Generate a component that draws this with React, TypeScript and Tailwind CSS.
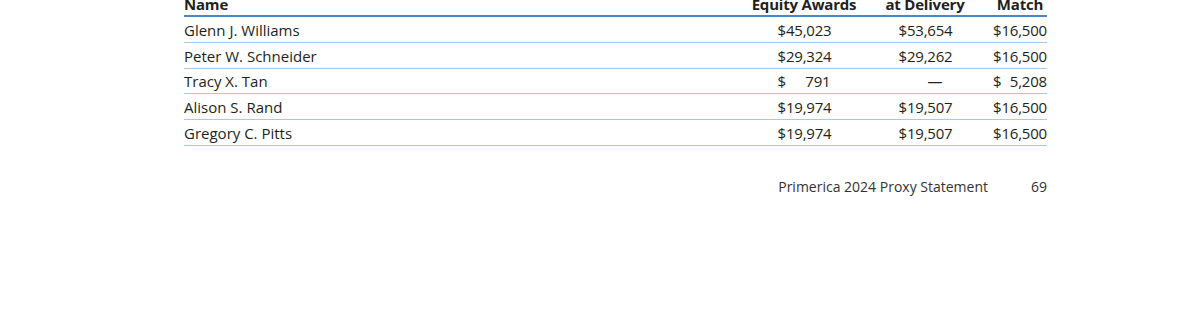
import React from "react";

type Cell = { d: string; n: string } | null;

const rows: { name: string; a: Cell; b: Cell; c: Cell; h: string }[] = [
  { name: "Glenn J. Williams", a: { d: "$", n: "45,023" }, b: { d: "$", n: "53,654" }, c: { d: "$", n: "16,500" }, h: "h-[26px]" },
  { name: "Peter W. Schneider", a: { d: "$", n: "29,324" }, b: { d: "$", n: "29,262" }, c: { d: "$", n: "16,500" }, h: "h-[26px]" },
  { name: "Tracy X. Tan", a: { d: "$", n: "791" }, b: null, c: { d: "$", n: "5,208" }, h: "h-[25px]" },
  { name: "Alison S. Rand", a: { d: "$", n: "19,974" }, b: { d: "$", n: "19,507" }, c: { d: "$", n: "16,500" }, h: "h-[26px]" },
  { name: "Gregory C. Pitts", a: { d: "$", n: "19,974" }, b: { d: "$", n: "19,507" }, c: { d: "$", n: "16,500" }, h: "h-[26px]" },
];

function Money({ v, w }: { v: Cell; w: string }) {
  if (!v) {
    return (
      <div className={`flex justify-end ${w} pr-[9px]`}>
        <span>—</span>
      </div>
    );
  }
  const joined = v.n.length >= 6;
  return (
    <div className={`flex justify-between ${w} tracking-[-0.2px]`}>
      {joined ? (
        <span>{v.d + v.n}</span>
      ) : (
        <>
          <span>{v.d}</span>
          <span>{v.n}</span>
        </>
      )}
    </div>
  );
}

export default function App() {
  return (
    <div
      className="w-[1200px] h-[312px] bg-white overflow-hidden text-[#231f20]"
      style={{ fontFamily: '"Open Sans", "Noto Sans", sans-serif' }}
    >
      <div className="ml-[184px] w-[863px]">
        <div className="grid grid-cols-[556px_128px_125px_54px] h-[15px] items-end font-bold text-[15px] leading-[15px] tracking-[-0.2px] -mt-[1px]">
          <div className="-translate-y-[2px]">Name</div>
          <div className="text-center -translate-y-[2px]">Equity Awards</div>
          <div className="text-center pr-[11px] -translate-y-[2px]">at Delivery</div>
          <div className="text-center -translate-y-[2px]">Match</div>
        </div>
        <div className="h-[2px] bg-[#4a86c8] mt-[1px]" />
        {rows.map((r) => (
          <div
            key={r.name}
            className={`grid grid-cols-[556px_128px_125px_54px] ${r.h} items-center pt-[1px] border-b border-[#a9c8e8] text-[15px] font-normal`}
          >
            <div>{r.name}</div>
            <div className="flex justify-center">
              <Money v={r.a} w="w-[53px]" />
            </div>
            <div className="flex justify-center pr-[11px]">
              <Money v={r.b} w="w-[53px]" />
            </div>
            <div className="flex justify-center">
              <Money v={r.c} w="w-[54px]" />
            </div>
          </div>
        ))}
        <div className="flex justify-end items-center mt-[30px] text-[14px] font-normal text-[#333333]">
          <span>Primerica 2024 Proxy Statement</span>
          <span className="ml-[43px]">69</span>
        </div>
      </div>
    </div>
  );
}
